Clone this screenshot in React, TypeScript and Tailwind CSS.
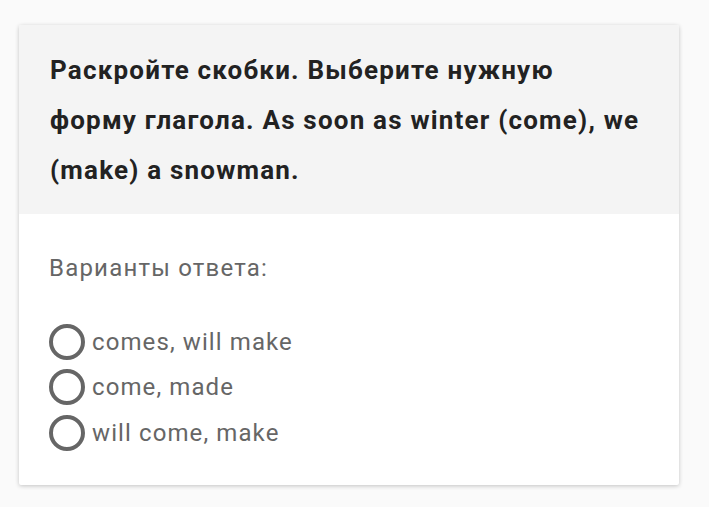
import { useState } from 'react'

const OPTIONS = ['comes, will make', 'come, made', 'will come, make']

export default function App() {
  const [picked, setPicked] = useState<number | null>(null)

  return (
    <div className="min-h-[507px] bg-[#fafafa] px-[19px] pt-[25px] font-['Roboto',sans-serif]">
      <div className="w-[660px] bg-white rounded-[2px] shadow-[0_1px_4px_rgba(0,0,0,0.22)] overflow-hidden">
        {/* Question */}
        <div className="bg-[#f4f4f4] pl-[31px] pr-[34px] pt-[20px] pb-[19px]">
          <p className="text-[26px] leading-[50px] tracking-[1.2px] font-bold text-[#222]">
            Раскройте скобки. Выберите нужную форму глагола. As soon as winter (come), we (make) a snowman.
          </p>
        </div>

        {/* Answers */}
        <div className="pl-[30px] pt-[38px] pb-[29px]">
          <p className="text-[24px] leading-[32px] tracking-[1.2px] text-[#666]">Варианты ответа:</p>
          <div className="mt-[35px] flex flex-col">
            {OPTIONS.map((opt, i) => (
              <button
                key={opt}
                onClick={() => setPicked(i)}
                className="flex items-center gap-[7px] h-[45.5px] text-left"
              >
                <span className="w-[36px] h-[36px] rounded-full border-[4px] border-[#666] flex items-center justify-center shrink-0">
                  {picked === i && <span className="w-[17px] h-[17px] rounded-full bg-[#666]" />}
                </span>
                <span className="text-[24px] tracking-[1.1px] text-[#666]">{opt}</span>
              </button>
            ))}
          </div>
        </div>
      </div>
    </div>
  )
}
